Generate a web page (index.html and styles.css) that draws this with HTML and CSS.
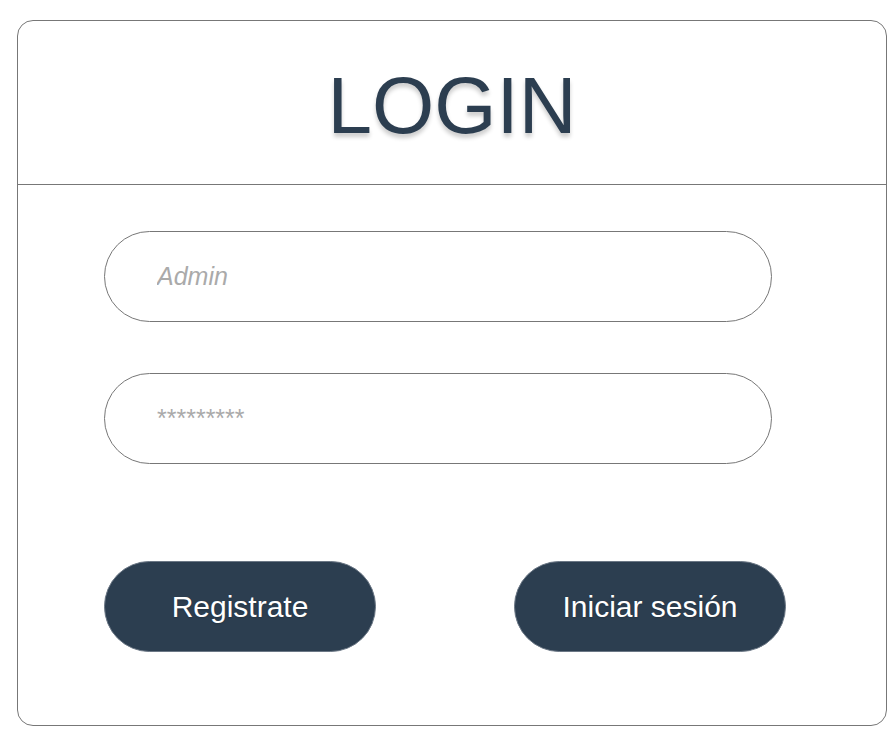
FILE: index.html
```html
<!DOCTYPE html>
<html lang="es">
<head>
<meta charset="utf-8">
<title>Login</title>
<link rel="stylesheet" href="styles.css">
</head>
<body>
<div class="card">
  <div class="card-header">
    <h1 class="title">LOGIN</h1>
  </div>
  <form class="form">
    <input class="field field-user" type="text" placeholder="Admin">
    <input class="field field-pass" type="password" placeholder="*********">
    <div class="actions">
      <button class="btn" type="button">Registrate</button>
      <button class="btn" type="button">Iniciar sesión</button>
    </div>
  </form>
</div>
</body>
</html>
```

FILE: styles.css
```css
html, body {
  margin: 0;
  padding: 0;
  background: #ffffff;
}
body {
  padding: 20px 0 0 17px;
  font-family: "Liberation Sans", Arial, sans-serif;
}
.card {
  box-sizing: border-box;
  width: 870px;
  height: 706px;
  border: 1px solid #777777;
  border-radius: 16px;
  display: flex;
  flex-direction: column;
}
.card-header {
  height: 163px;
  border-bottom: 1px solid #777777;
  display: flex;
  align-items: center;
  justify-content: center;
}
.title {
  margin: 0;
  padding-top: 6px;
  font-weight: normal;
  font-size: 80px;
  line-height: 1;
  color: #2c3e50;
  text-shadow: 0 4px 4px rgba(0, 0, 0, 0.2);
}
.form {
  display: flex;
  flex-direction: column;
  padding: 46px 0 0 86px;
}
.field {
  box-sizing: border-box;
  width: 668px;
  height: 91px;
  border: 1px solid #777777;
  border-radius: 46px;
  padding: 0 0 0 52px;
  font-family: "Liberation Sans Narrow", "Arial Narrow", "Liberation Sans", Arial, sans-serif;
  font-size: 25px;
  color: #333;
  outline: none;
  background: #fff;
}
.field::placeholder {
  color: #aaaaaa;
}
.field-user::placeholder {
  font-style: italic;
}
.field-pass {
  margin-top: 51px;
}
.actions {
  display: flex;
  gap: 138px;
  margin-top: 97px;
}
.btn {
  box-sizing: border-box;
  width: 272px;
  height: 91px;
  border: 1px solid #6b7785;
  border-radius: 46px;
  background: #2c3e50;
  color: #ffffff;
  font-family: "Liberation Sans", Arial, sans-serif;
  font-size: 30px;
  text-shadow: 0 1px 2px rgba(0, 0, 0, 0.2);
  cursor: pointer;
}
```
